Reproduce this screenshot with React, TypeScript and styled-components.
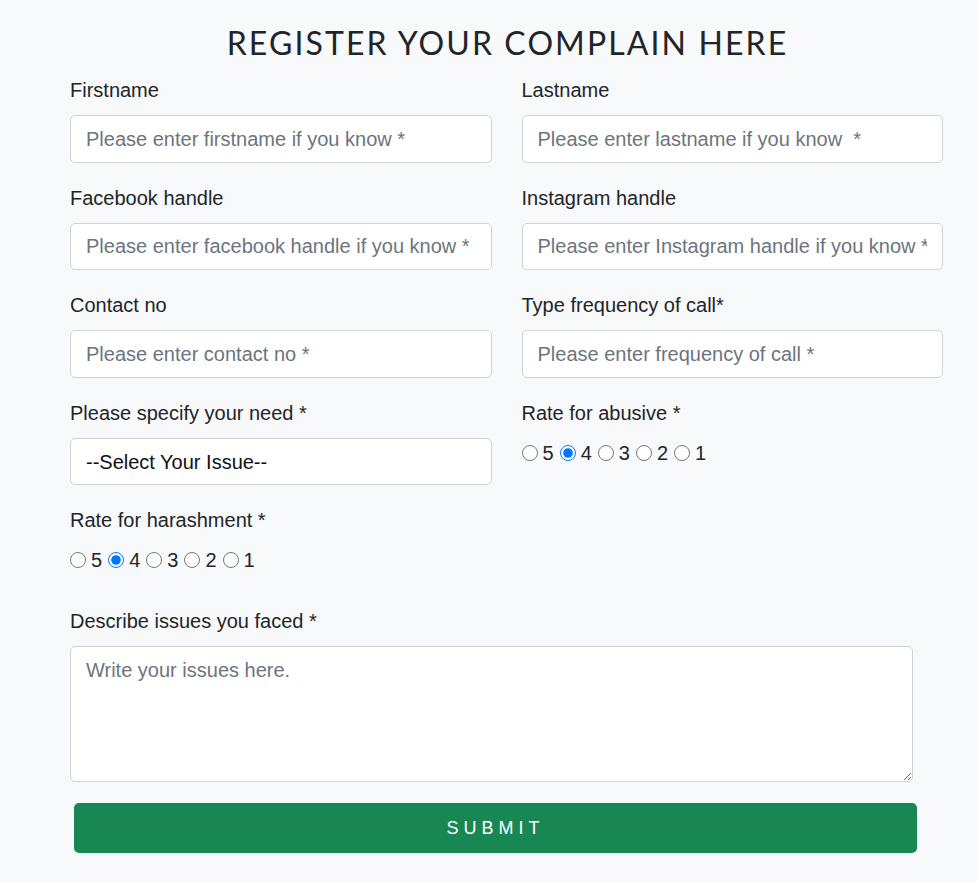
import React from "react";
import styled, { createGlobalStyle } from "styled-components";

const Global = createGlobalStyle`
  html, body { margin: 0; padding: 0; background: #f8f9fa; }
  body { font-family: "Liberation Sans", Arial, sans-serif; color: #212529; }
  * { box-sizing: border-box; }
`;

const Page = styled.div`
  padding: 24px 34px 30px 70px;
`;

const Title = styled.h2`
  margin: 0 0 13px;
  font-family: Lato, "Open Sans", sans-serif;
  font-weight: 400;
  font-size: 32px;
  line-height: 1.2;
  letter-spacing: 2.1px;
  text-indent: 2px;
  text-align: center;
  color: #212529;
`;

const Grid = styled.div`
  display: grid;
  grid-template-columns: 1fr 1fr;
  column-gap: 30px;
  row-gap: 20px;
`;

const Field = styled.div`
  display: flex;
  flex-direction: column;
  min-width: 0;
`;

const Label = styled.label`
  display: block;
  font-size: 20px;
  line-height: 30px;
  margin-bottom: 10px;
  color: #212529;
`;

const controlBase = `
  width: 100%;
  padding: 7.5px 15px;
  font-family: "Liberation Sans", Arial, sans-serif;
  font-size: 20px;
  line-height: 30px;
  color: #495057;
  background: #fff;
  border: 1px solid #ced4da;
  border-radius: 5px;
  outline: none;
  margin: 0;
`;

const Input = styled.input`
  ${controlBase}
  height: 47.5px;
  &::placeholder { color: #6c757d; opacity: 1; }
`;

const Select = styled.select`
  ${controlBase}
  height: 47.5px;
  appearance: none;
  -webkit-appearance: none;
  color: #111;
`;

const RadioRow = styled.div`
  display: flex;
  align-items: center;
  height: 30px;
  font-size: 20px;
`;

const Radio = styled.input`
  width: 16px;
  height: 16px;
  margin: 0 5px 0 0;
  flex: none;
`;

const RadioText = styled.span`
  margin-right: 6px;
  line-height: 30px;
  color: #212529;
`;

const DescField = styled(Field)`
  margin-top: 31px;
  width: 843px;
`;

const TextArea = styled.textarea`
  ${controlBase}
  height: 136px;
  resize: vertical;
  display: block;
  &::placeholder { color: #6c757d; opacity: 1; }
`;

const SubmitButton = styled.button`
  display: block;
  margin: 21px 0 0 4px;
  width: 843px;
  height: 50px;
  border: none;
  border-radius: 5px;
  background: #198754;
  color: #fff;
  font-family: "Liberation Sans", Arial, sans-serif;
  font-size: 18px;
  letter-spacing: 5px;
  text-transform: uppercase;
  cursor: pointer;
`;

const Rating: React.FC<{ name: string; checked: number }> = ({ name, checked }) => (
  <RadioRow>
    {[5, 4, 3, 2, 1].map((v) => (
      <React.Fragment key={v}>
        <Radio type="radio" name={name} value={v} defaultChecked={v === checked} />
        <RadioText>{v}</RadioText>
      </React.Fragment>
    ))}
  </RadioRow>
);

const fields: { label: string; placeholder: string }[] = [
  { label: "Firstname", placeholder: "Please enter firstname if you know *" },
  { label: "Lastname", placeholder: "Please enter lastname if you know  *" },
  { label: "Facebook handle", placeholder: "Please enter facebook handle if you know *" },
  { label: "Instagram handle", placeholder: "Please enter Instagram handle if you know *" },
  { label: "Contact no", placeholder: "Please enter contact no *" },
  { label: "Type frequency of call*", placeholder: "Please enter frequency of call *" },
];

export default function App() {
  return (
    <>
      <Global />
      <Page>
        <Title>REGISTER YOUR COMPLAIN HERE</Title>
        <form onSubmit={(e) => e.preventDefault()}>
          <Grid>
            {fields.map((f) => (
              <Field key={f.label}>
                <Label>{f.label}</Label>
                <Input type="text" placeholder={f.placeholder} />
              </Field>
            ))}
            <Field>
              <Label>Please specify your need *</Label>
              <Select defaultValue="">
                <option value="">--Select Your Issue--</option>
                <option value="abuse">Abuse</option>
                <option value="harassment">Harassment</option>
              </Select>
            </Field>
            <Field>
              <Label>Rate for abusive *</Label>
              <Rating name="abusive" checked={4} />
            </Field>
            <Field>
              <Label>Rate for harashment *</Label>
              <Rating name="harashment" checked={4} />
            </Field>
          </Grid>
          <DescField>
            <Label>Describe issues you faced *</Label>
            <TextArea placeholder="Write your issues here." />
          </DescField>
          <SubmitButton type="submit">Submit</SubmitButton>
        </form>
      </Page>
    </>
  );
}
